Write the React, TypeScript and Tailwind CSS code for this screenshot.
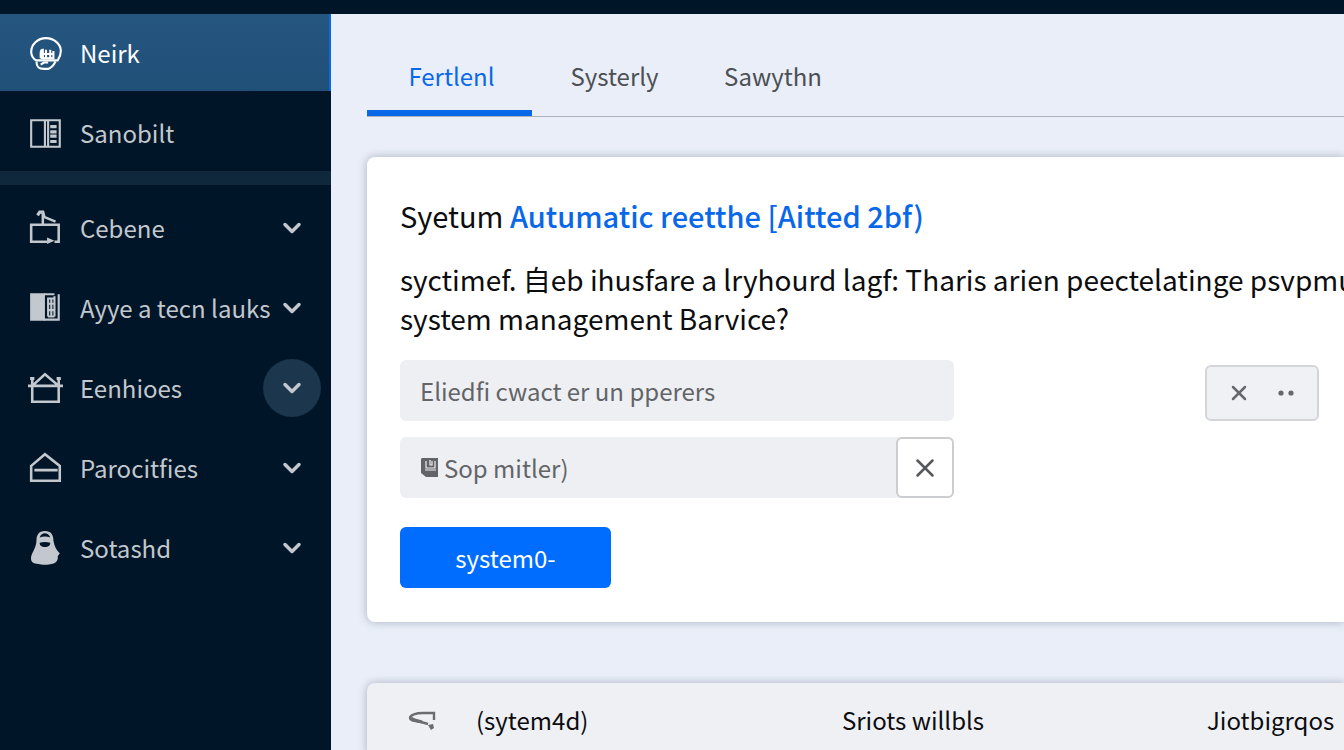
import React from "react";
import { ChevronDown, X } from "lucide-react";

type IconProps = { className?: string };

const HeadIcon = ({ className }: IconProps) => (
  <svg viewBox="0 0 34 34" className={className} fill="none" stroke="currentColor" strokeWidth="2" aria-hidden="true">
    <path d="M8 24c-3-1-5-5-5-8C3 9 9 3 17 3s14 6 14 12c0 4-1 6-3 9H8" />
    <path d="M8 25c0 6 3 7 7 7h4c3-1 5-3 7-7M12 28l3-2h4" />
    <path d="M12 22v-5c0-2 1-3 2-3v8m3 0v-8m4 8v-8m3 8v-7M11 18h14M12 22h13" />
  </svg>
);

const PanelIcon = ({ className }: IconProps) => (
  <svg viewBox="0 0 34 34" className={className} fill="none" stroke="currentColor" strokeWidth="2" aria-hidden="true">
    <path d="M3 5h27v25H3zM16 5v25M19 5v25" />
    <path d="M21 11h6M21 16h6M21 20h6M21 25h6" strokeWidth="3" />
  </svg>
);

const CraneIcon = ({ className }: IconProps) => (
  <svg viewBox="0 0 34 34" className={className} fill="none" stroke="currentColor" strokeWidth="2.4" aria-hidden="true">
    <path d="M18 30H3V14h26v16h-4M14 14V4M14 6l12 5" />
    <path d="M9 5l2-3h3l1 4" strokeWidth="3" />
    <path d="M18 26l7 3-7 3z" fill="currentColor" stroke="none" />
  </svg>
);

const BookIcon = ({ className }: IconProps) => (
  <svg viewBox="0 0 34 34" className={className} fill="none" stroke="currentColor" strokeWidth="2" aria-hidden="true">
    <path d="M3 4h12v24H3z" fill="currentColor" />
    <path d="M15 4h10M15 28h14V4M19 7v18M25 6v19M19 8h6M19 13h6M19 19h6M19 25h6M22 8v17" />
  </svg>
);

const HouseIcon = ({ className }: IconProps) => (
  <svg viewBox="0 0 34 34" className={className} fill="none" stroke="currentColor" strokeWidth="2.4" aria-hidden="true">
    <path d="M0 15h33M4 15v15h25V15M4 15L16 4l13 11M4 15V7M29 15V7" />
    <path d="M2 8h4M27 8h4" strokeWidth="3" />
  </svg>
);

const HomeIcon = ({ className }: IconProps) => (
  <svg viewBox="0 0 34 34" className={className} fill="none" stroke="currentColor" strokeWidth="2.4" aria-hidden="true">
    <path d="M3 15L16 4l14 11v14H3zM6 19h22" />
  </svg>
);

const PersonIcon = ({ className }: IconProps) => (
  <svg viewBox="0 0 34 34" className={className} fill="currentColor" aria-hidden="true">
    <path
      fillRule="evenodd"
      d="M16 1c6 0 8 4 8 9 1 5 2 8 6 12l-2 3c1 3-2 7-6 7-2 1-10 1-12 0-5 0-8-2-7-7 1-4 5-9 5-15C8 5 10 1 16 1zm-5 6c3-1 7-1 10 0-1-3-3-4-5-4s-4 1-5 4zm0 5c0 3 2 4 5 4s5-1 5-4c-3-1-7-1-10 0z"
    />
  </svg>
);

const SaveIcon = ({ className }: IconProps) => (
  <svg viewBox="0 0 20 22" className={className} aria-hidden="true">
    <path d="M2 1h16v19H6l-5-4V2z" fill="currentColor" />
    <path d="M6 4v7h9V4M10 3v5h2V4M5 13h11" fill="none" stroke="#eeeff2" strokeWidth="1.2" />
  </svg>
);

const ReturnIcon = ({ className }: IconProps) => (
  <svg viewBox="0 0 30 22" className={className} fill="none" stroke="currentColor" strokeWidth="2.4" aria-hidden="true">
    <path d="M27 11V4H16C9 4 3 6 3 9s5 3 11 4l7 2" />
    <path d="M4 9c3 2 7 3 11 4" strokeWidth="3" />
    <path d="M21 16l5-1 1 4-3 2z" fill="currentColor" stroke="none" />
  </svg>
);

const groups = [
  { label: "Cebene", Icon: CraneIcon, active: false },
  { label: "Ayye a tecn lauks", Icon: BookIcon, active: false },
  { label: "Eenhioes", Icon: HouseIcon, active: true },
  { label: "Parocitfies", Icon: HomeIcon, active: false },
  { label: "Sotashd", Icon: PersonIcon, active: false },
];

function Sidebar() {
  return (
    <nav aria-label="Main" className="w-[331px] shrink-0 bg-[#001628] text-2xl text-[#c3c8ce]">
      <a href="#home" className="flex h-[77px] items-center gap-4 border-r-2 border-[#0968e8] bg-linear-to-b from-[#255680] to-[#205078] pl-7 text-white">
        <HeadIcon className="size-9" />
        Neirk
      </a>
      <a href="#overview" className="flex h-20 items-center gap-4 pt-1 pl-7">
        <PanelIcon className="size-9" />
        Sanobilt
      </a>
      <div className="h-3.5 bg-[#10283b]" />
      <ul className="pt-[3px]">
        {groups.map(({ label, Icon, active }) => (
          <li key={label}>
            <button type="button" className="flex h-20 w-full items-center gap-4 pr-2.5 pl-7 text-left whitespace-nowrap">
              <Icon className="size-9 shrink-0" />
              <span className="min-w-0 flex-1">{label}</span>
              <span className={active ? "-ml-4 grid size-[58px] place-items-center rounded-full bg-[#1c364d]" : "-ml-4 grid size-[58px] place-items-center"}>
                <ChevronDown className="size-7" strokeWidth={3} />
              </span>
            </button>
          </li>
        ))}
      </ul>
    </nav>
  );
}

export default function App() {
  return (
    <div className="flex h-screen flex-col overflow-hidden bg-[#e9eef8] font-['Noto_Sans_CJK_SC','Noto_Sans',sans-serif] text-[#0c0d0f]">
      <header className="h-3.5 shrink-0 bg-[#001628]" />
      <div className="flex min-h-0 flex-1">
        <Sidebar />
        <main className="min-w-0 flex-1 pl-9">
          <div role="tablist" className="flex h-[103px] items-end border-b border-[#aeb1b8] text-2xl whitespace-nowrap text-[#4c4f54]">
            <button role="tab" aria-selected="true" type="button" className="h-20 w-[165px] border-b-[6px] border-[#0968e8] pt-1.5 pl-1 text-[#0968e8]">Fertlenl</button>
            <button role="tab" aria-selected="false" type="button" className="h-20 w-[165px]">Systerly</button>
            <button role="tab" aria-selected="false" type="button" className="h-20 w-[152px]">Sawythn</button>
          </div>

          <section className="mt-10 overflow-hidden rounded-l-lg bg-white pt-[38px] pb-[34px] pl-[33px] shadow-[0_0_8px_rgba(70,85,110,0.4)]">
            <h1 className="text-[29px] leading-10 whitespace-nowrap">
              Syetum <span className="font-medium text-[#0968e8]">Autumatic reetthe [Aitted 2bf)</span>
            </h1>
            <p className="mt-[25px] text-[28px] leading-[39px] whitespace-nowrap">
              syctimef. 自eb ihusfare a lryhourd lagf: Tharis arien peectelatinge psvpmu
              <br />
              system management Barvice?
            </p>
            <form className="mt-[21px]" onSubmit={(e) => e.preventDefault()}>
              <div className="flex items-center justify-between gap-6 pr-[25px]">
                <input aria-label="Search" placeholder="Eliedfi cwact er un pperers" className="h-[61px] w-[554px] rounded-md bg-[#eeeff2] px-5 text-2xl placeholder:text-[#626468]" />
                <div className="mt-1.5 flex h-14 w-[114px] items-center justify-between rounded-md border-2 border-[#d3d5d9] bg-[#f0f1f5] px-5 text-[#66686c]">
                  <button type="button" aria-label="Remove"><X className="size-6" strokeWidth={2.5} /></button>
                  <button type="button" aria-label="More">
                    <svg viewBox="0 0 20 6" className="h-1.5 w-5" fill="currentColor" aria-hidden="true"><circle cx="4" cy="3" r="2.6" /><circle cx="14" cy="3" r="2.6" /></svg>
                  </button>
                </div>
              </div>
              <div className="mt-4 flex h-[61px] w-[554px] items-center rounded-md bg-[#eeeff2] pl-5 text-[#626468]">
                <SaveIcon className="mr-1 h-[22px] w-5" />
                <input aria-label="Filter" placeholder="Sop mitler)" className="h-full min-w-0 flex-1 text-2xl placeholder:text-[#626468]" />
                <button type="button" aria-label="Clear" className="grid h-full w-[58px] place-items-center rounded-md border-2 border-[#cbcdd1] bg-white text-[#55585c]">
                  <X className="size-[30px]" />
                </button>
              </div>
              <button type="submit" className="mt-[29px] h-[61px] w-[211px] rounded-md bg-[#006dff] text-2xl text-white">system0-</button>
            </form>
          </section>

          <table className="mt-[61px] h-[74px] w-full table-fixed rounded-l-lg bg-[#eff0f4] text-left text-2xl whitespace-nowrap shadow-[0_0_8px_rgba(70,85,110,0.4)]">
            <thead>
              <tr>
                <th className="w-[109px] pl-10"><ReturnIcon className="h-[22px] w-[30px] text-[#6a6c70]" /></th>
                <th className="w-[366px] font-normal">(sytem4d)</th>
                <th className="w-[365px] font-normal">Sriots willbls</th>
                <th className="font-normal">Jiotbigrqos</th>
              </tr>
            </thead>
          </table>
        </main>
      </div>
    </div>
  );
}
